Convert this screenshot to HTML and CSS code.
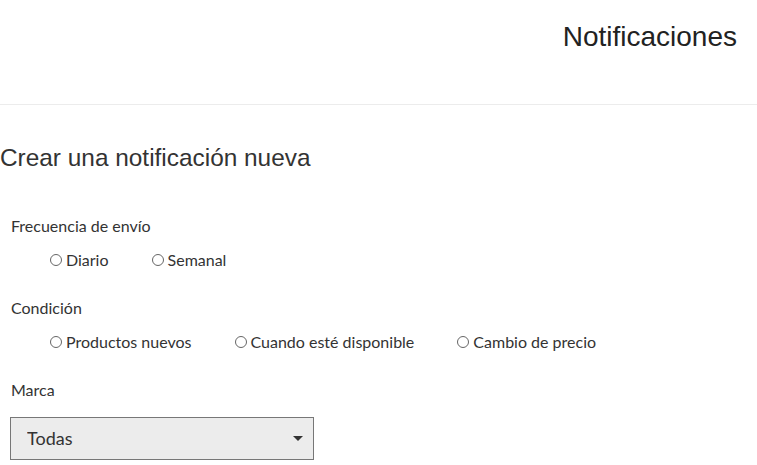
FILE: index.html
```html
<!DOCTYPE html>
<html lang="es">
<head>
  <meta charset="UTF-8" />
  <meta name="viewport" content="width=device-width, initial-scale=1.0"/>
  <title>Notificaciones</title>
  <link rel="stylesheet" href="styles.css">
</head>
<body>
  <header class="page-header">
    <h1>Notificaciones</h1>
  </header>

  <main class="content">
    <h2>Crear una notificación nueva</h2>

    <form class="notify-form">
      <div class="field">
        <span class="field-label">Frecuencia de envío</span>
        <div class="options">
          <label class="option"><input type="radio" name="frequency" value="daily"> Diario</label>
          <label class="option"><input type="radio" name="frequency" value="weekly"> Semanal</label>
        </div>
      </div>

      <div class="field">
        <span class="field-label">Condición</span>
        <div class="options">
          <label class="option"><input type="radio" name="condition" value="new"> Productos nuevos</label>
          <label class="option"><input type="radio" name="condition" value="stock"> Cuando esté disponible</label>
          <label class="option"><input type="radio" name="condition" value="price"> Cambio de precio</label>
        </div>
      </div>

      <div class="field">
        <label class="field-label" for="brand">Marca</label>
        <div class="select-wrap">
          <select id="brand">
            <option>Todas</option>
          </select>
        </div>
      </div>
    </form>
  </main>
</body>
</html>
```

FILE: styles.css
```css
body {
  margin: 0;
  font-family: "Liberation Sans", Arial, sans-serif;
  color: #333;
  background: #fff;
}

.page-header {
  height: 104px;
  border-bottom: 1px solid #ececec;
  display: flex;
  justify-content: flex-end;
  padding-right: 20px;
}

.page-header h1 {
  margin: 21px 0 0;
  font-size: 28px;
  font-weight: normal;
  color: #222;
}

.content h2 {
  margin: 39px 0 0;
  font-size: 24.4px;
  font-weight: normal;
  color: #333;
}

.notify-form {
  padding: 44px 10px 0;
  font-family: Lato, sans-serif;
  font-size: 16px;
}

.field {
  margin-bottom: 28px;
}

.field:last-child {
  margin-bottom: 0;
}

.field-label {
  display: block;
  margin: 0 0 0 1px;
  line-height: 20px;
}

.options {
  display: flex;
  padding: 14px 0 0 40px;
}

.option {
  display: flex;
  align-items: center;
  margin-right: 43px;
  line-height: 20px;
}

.option input {
  appearance: none;
  width: 12px;
  height: 12px;
  margin: 0 4px 0 0;
  border: 1px solid #666;
  border-radius: 50%;
  background: #fff;
}

.select-wrap {
  position: relative;
  width: 304px;
  margin-top: 17px;
}

.select-wrap select {
  appearance: none;
  width: 100%;
  height: 43px;
  padding: 0 16px 2px;
  border: 1px solid #777;
  border-radius: 0;
  background: #ececec;
  font-family: inherit;
  font-size: 18px;
  color: #333;
}

.select-wrap::after {
  content: "";
  position: absolute;
  right: 11px;
  top: 19px;
  border-left: 5px solid transparent;
  border-right: 5px solid transparent;
  border-top: 5px solid #333;
}
```
